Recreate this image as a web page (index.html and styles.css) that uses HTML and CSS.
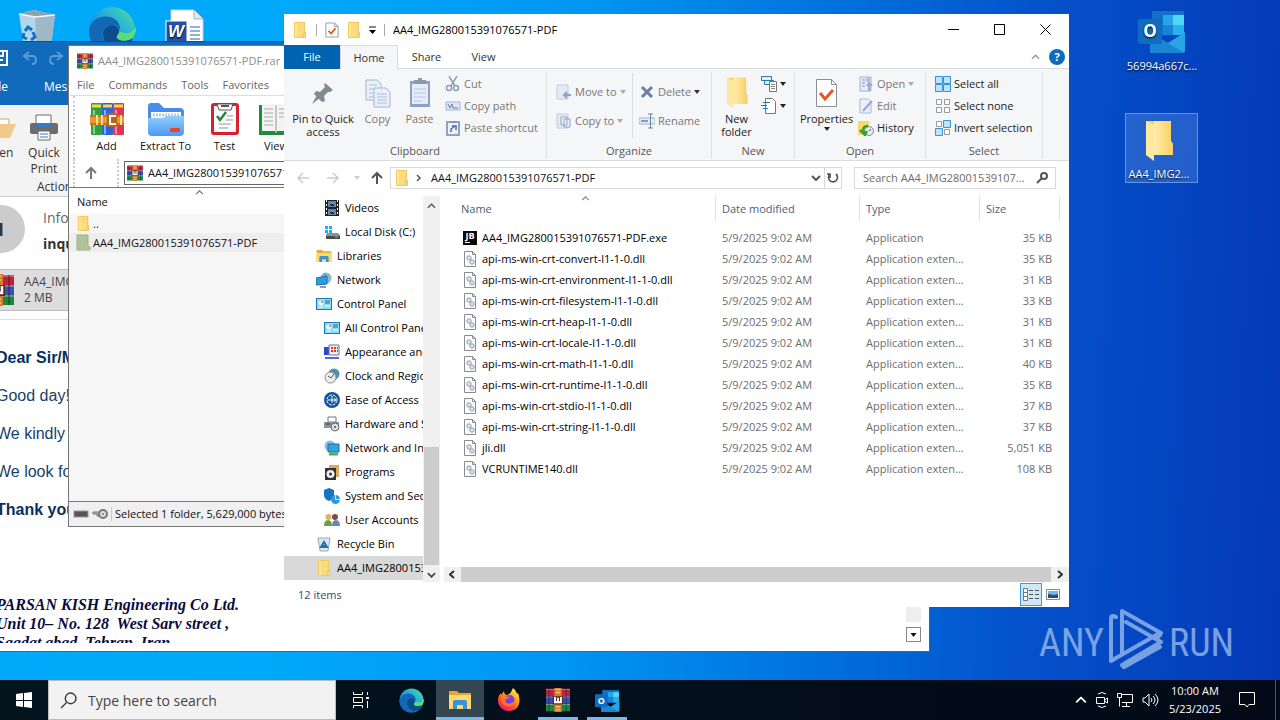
FILE: index.html
```html
<!DOCTYPE html>
<html lang="en">
<head>
<meta charset="utf-8">
<title>Desktop</title>
<link rel="stylesheet" href="styles.css">
</head>
<body>
<svg class="defs" aria-hidden="true">
  <defs>
    <linearGradient id="gFolder" x1="0" x2="1"><stop offset="0" stop-color="#ffedaa"/><stop offset="1" stop-color="#f8cf62"/></linearGradient>
    <linearGradient id="gEdge" x1="0" y1="1" x2="1" y2="0"><stop offset="0" stop-color="#0c59a4"/><stop offset=".45" stop-color="#1b9de2"/><stop offset=".75" stop-color="#35c1c9"/><stop offset="1" stop-color="#66eb6e"/></linearGradient>
    <linearGradient id="gFox" x1=".8" y1="0" x2=".2" y2="1"><stop offset="0" stop-color="#fff44f"/><stop offset=".4" stop-color="#ff980e"/><stop offset=".75" stop-color="#ff3647"/><stop offset="1" stop-color="#e31587"/></linearGradient>
    <linearGradient id="gBlueFolder" x1="0" y1="0" x2="0" y2="1"><stop offset="0" stop-color="#93cdfd"/><stop offset="1" stop-color="#4a9bf3"/></linearGradient>
  </defs>
  <symbol id="folder" viewBox="0 0 16 16"><path d="M2 0h11v10l1 1v5H2z" fill="#fbdc7c"/><path d="M2 0l3 1v15H2z" fill="#ffe798"/><path d="M2.500.5h10v10h1v5h-11zM11.500 15v-4h2" fill="none" stroke="#ecc457" stroke-width=".8"/></symbol>
  <symbol id="bigfolder" viewBox="0 0 28 42"><path d="M1 1h25v20l2 3v11H1z" fill="#f6cf67"/><path d="M9 1h17v20l2 3v11H9z" fill="url(#gFolder)"/><path d="M1 1l8 4v36l-8-6z" fill="#ffe9a0"/></symbol>
  <symbol id="rar" viewBox="0 0 32 32"><path d="M0 1h32v10H0z" fill="#c3203c"/><path d="M0 11h32v10H0z" fill="#3a4fb0"/><path d="M0 21h32v10H0z" fill="#1d8540"/><path d="M0 2h32M0 12h32M0 22h32" stroke="#fff" stroke-opacity=".35" stroke-width="1.5"/><path d="M4 1v30M27 1v30" stroke="#222" stroke-opacity=".4" stroke-width="2"/><path d="M11 0h10v32H11z" fill="#d67a2c"/><path d="M13 2h6M13 6h6M13 25h6M13 29h6" stroke="#f3c069" stroke-width="2"/><path d="M9 11h14v11H9z" fill="#5a2a26"/><path d="M12 12v7h8v-7M16 13v6" fill="none" stroke="#fff" stroke-width="2.5"/></symbol>
  <symbol id="addrar" viewBox="0 0 34 34"><rect x="1" y="1" width="11" height="32" rx="1" fill="#2aa43a"/><rect x="12" y="1" width="11" height="32" rx="1" fill="#2b65d8"/><rect x="23" y="1" width="11" height="32" rx="1" fill="#dc3556"/><path d="M2 4h9M13 4h9M24 4h9" stroke="#ffd54e" stroke-width="3"/><path d="M4 8v24M15 8v24M26 8v24" stroke="#fff" stroke-opacity=".45" stroke-width="2"/><path d="M0 13h34v10H0z" fill="#e9962f"/><path d="M0 14h34M0 22h34" stroke="#b9691d" stroke-width="1.500"/><path d="M7 13v10M12 13v10M31 13v10" stroke="#ffe08a" stroke-width="2"/><rect x="17" y="11" width="10" height="14" rx="2" fill="#b8641f"/><path d="M26 14h-6v8h6" fill="none" stroke="#fff" stroke-width="2"/></symbol>
  <symbol id="extract" viewBox="0 0 36 34"><path d="M0 4q0-3 3-3h8l5 5h16q4 0 4 4v10H0z" fill="#4a8ceb"/><path d="M3 10h30v12H3z" fill="#fff"/><path d="M5 13h26" stroke="#bfc9d6" stroke-width="3" stroke-dasharray="2 1"/><path d="M0 16h15l3-2h18v16q0 4-4 4H4q-4 0-4-4z" fill="url(#gBlueFolder)"/><rect x="22" y="26" width="10" height="4" rx="1" fill="#e8432e"/></symbol>
  <symbol id="test" viewBox="0 0 28 34"><rect y="1" width="28" height="32" rx="3" fill="#d9202f"/><rect x="3" y="4" width="22" height="26" fill="#fafafa"/><path d="M6 2h16l-2 6H8z" fill="#fff" stroke="#555"/><path d="M10 4h8" stroke="#555" stroke-width="2"/><path d="M6 14l3 4 6-8" fill="none" stroke="#25863a" stroke-width="2.500"/><path d="M16 14h6M15 18h7M8 22h12M8 26h9" stroke="#999"/></symbol>
  <symbol id="view" viewBox="0 0 34 34"><path d="M0 3h34v30H0z" fill="#1f8b3c"/><path d="M3 2h13l1 2 1-2h13v27H18l-1 2-1-2H3z" fill="#f3f3f3"/><path d="M17 4v25" stroke="#999"/><path d="M5 7h9M5 11h9M5 15h9M5 19h9M5 23h9M20 7h9M20 11h9M20 15h9" stroke="#aaa"/></symbol>
  <symbol id="edge" viewBox="0 0 48 48"><circle cx="24" cy="24" r="23" fill="url(#gEdge)"/><path d="M1 25C3 12 14 9 22 11c8 2 11 9 10 14-1-4-4-6-8-6-7 0-11 6-9 14 2 7 8 12 15 13C14 50 1 40 1 25z" fill="#1467b5"/><path d="M15 28c0-5 4-9 9-9 5 0 8 4 7 8-1 2-3 3-2 5 2 3 10 4 16 0-4 9-12 13-17 13-7-2-13-9-13-17z" fill="#0c4b8e"/><path d="M31 25c1 3-3 4-2 7 3 4 11 3 16 0l3-7c0-2-1-5-1-5-2 8-9 9-16 5z" fill="#5bdd75"/></symbol>
  <symbol id="explorer" viewBox="0 0 24 22"><path d="M1 2h8l2 2h12v16H1z" fill="#e9a52f"/><path d="M1 6h22v14H1z" fill="#ffd970"/><path d="M5 20v-7q0-2 2-2h10q2 0 2 2v7h-4v-4H9v4z" fill="#3a93d6"/></symbol>
  <symbol id="fox" viewBox="0 0 24 24"><path d="M12 23C5 23 1 18 1 12c0-3 1-5 3-7v2l3-4c0 2 1 3 2 4 3-1 4-1 5-3l2-4c2 2 3 3 4 6l1-1c3 8 2 18-9 18z" fill="url(#gFox)"/><circle cx="12.500" cy="12" r="5" fill="#7542e5"/><path d="M4 9c3-2 5 0 9 0-2 2-5 2-5 4 1 3 6 4 9 0 0 4-4 6-7 5-4 0-6-4-6-9z" fill="#ff7a1c"/></symbol>
  <symbol id="outlook" viewBox="0 0 48 44"><path d="M14 2h32v24H14z" fill="#1172c4"/><path d="M25 6h10v10H25z" fill="#27a5e8"/><path d="M35 6h11v10H35z" fill="#4fd8f8"/><path d="M25 16h10v10H25z" fill="#1685d8"/><path d="M35 16h11v10H35z" fill="#2ab0ee"/><path d="M12 24l18 10 17-11v20H12z" fill="#29a3e6"/><path d="M12 24l35 20H12z" fill="#1b86d3"/><rect y="10" width="24" height="25" rx="2" fill="#0f6cc2"/><text x="12" y="28" text-anchor="middle" font-family="Open Sans, sans-serif" font-weight="700" font-size="17" fill="#fff">O</text></symbol>
  <symbol id="win" viewBox="0 0 16 16"><path d="M0 2l7-1v7H0zM8 1l8-1v8H8zM0 9h7v6l-7-1zM8 9h8v7l-8-1z" fill="#fff"/></symbol>
  <symbol id="magnify" viewBox="0 0 16 16"><circle cx="10" cy="6" r="5" fill="none" stroke="currentColor" stroke-width="1.300"/><path d="M6 10L1 15" stroke="currentColor" stroke-width="1.300"/></symbol>
  <symbol id="dll" viewBox="0 0 14 16"><path d="M1.500.5h8l3 3v12h-11z" fill="#fdfdfd" stroke="#8b8b8b"/><path d="M9.500.5v3h3" fill="none" stroke="#8b8b8b"/><circle cx="6" cy="7" r="2.200" fill="#dce6ef" stroke="#8ba0b3"/><circle cx="9" cy="11" r="2.200" fill="#dce6ef" stroke="#8ba0b3"/></symbol>
  <symbol id="jb" viewBox="0 0 14 14"><path d="M0 0h14v14H0z" fill="#0b0b0b"/><text x="7" y="8" text-anchor="middle" font-family="Open Sans, sans-serif" font-weight="700" font-size="9" fill="#fff">JB</text><path d="M2 11.500h5" stroke="#fff"/></symbol>
  <symbol id="sheet" viewBox="0 0 16 18"><path d="M1 1h10l4 4v12H1z" fill="#fff" stroke="#8b929a"/><path d="M11 1v4h4" fill="none" stroke="#8b929a"/><path d="M4 10l3 3 5-6" fill="none" stroke="#e2521f" stroke-width="2"/></symbol>
  <symbol id="cpanel" viewBox="0 0 16 12"><path d="M0 0h16v12H0z" fill="#1b7bbd"/><path d="M1 1h14v10H1z" fill="#8bdcfa"/><circle cx="5" cy="5" r="2.500" fill="#fff"/><path d="M5 5V2.500A2.500 2.500 0 0 1 7.500 5z" fill="#e39a2a"/><path d="M9 3h5M9 5h5" stroke="#1766a8"/><path d="M9 8h5M3 9h4" stroke="#fff"/></symbol>
  <symbol id="up" viewBox="0 0 12 14"><path d="M6 13V2M1 7l5-5 5 5" fill="none" stroke="currentColor" stroke-width="2"/></symbol>
  <symbol id="chev" viewBox="0 0 10 6"><path d="M1 5l4-4 4 4" fill="none" stroke="currentColor" stroke-width="1.500"/></symbol>
  <symbol id="caret" viewBox="0 0 6 4"><path d="M0 0h6L3 4z" fill="currentColor"/></symbol>
  <symbol id="bin" viewBox="0 0 40 46"><path d="M2 5l15-4 21 5-5 39H8z" fill="#cfdfe9" fill-opacity=".85"/><path d="M2 5l16 3 20-2-21-5z" fill="#8fa4ae"/><path d="M18 8l20-2-5 39H20z" fill="#9fb8c8"/><path d="M2 5l16 3 20-2" fill="none" stroke="#f4f8fa" stroke-width="1.500"/><path d="M8 22l3-4 4 3M16 23l2 5-4 3M10 30l-4-2 1-4" fill="none" stroke="#1672c4" stroke-width="3"/></symbol>
</svg>

<main class="desktop">
  <div class="shortcut s-bin"><svg width="40" height="46"><use href="#bin"/></svg></div>
  <div class="shortcut s-edge"><svg width="48" height="48"><use href="#edge"/></svg></div>
  <div class="shortcut s-word"><svg width="40" height="44" viewBox="0 0 40 44"><path d="M6 1h23l9 9v33H6z" fill="#fff" stroke="#ccc"/><path d="M29 1v9h9" fill="#ddeaf6" stroke="#aac"/><path d="M25 18h10M25 22h10M25 26h10M25 30h10" stroke="#2b5fb4"/><rect x="1" y="12" width="21" height="22" fill="#2352a8" stroke="#fff"/><text x="11" y="28" text-anchor="middle" font-family="Liberation Sans, sans-serif" font-weight="700" font-style="italic" font-size="17" fill="#fff">W</text></svg></div>
  <a class="shortcut s-mail" href="#"><svg width="48" height="44"><use href="#outlook"/></svg><span>56994a667c...</span></a>
  <a class="shortcut s-folder" href="#"><svg width="28" height="42"><use href="#bigfolder"/></svg><span>AA4_IMG2...</span></a>

  <svg class="watermark" width="200" height="64" viewBox="0 0 200 64" aria-label="ANY RUN">
    <g fill="#a9c8f2" font-family="'Liberation Sans Narrow', 'Roboto Condensed', 'Open Sans Condensed', sans-serif" font-size="38"><text x="0" y="48">ANY</text><text x="130" y="48">RUN</text></g>
    <g fill="none" stroke="#a9c8f2" stroke-width="4" stroke-linejoin="round" stroke-linecap="round"><path d="M77 9l-3-1q-2 0-2 3v42l5-3 42-24q4-2 2 1l-2 2"/><path d="M83 46V3l39 22M87 14l35 20-39 23 2 2 36-20"/></g>
  </svg>

  <section class="window mail" aria-label="Message">
    <header class="mail-top">
      <div class="mail-quick"><svg width="100" height="20" viewBox="0 0 100 20" fill="none"><path d="M10 3h16v14H10zM14 3v5h8V3M14 17v-5h8" stroke="#fff" stroke-width="2"/><path d="M48 4l-5 4 5 4M43 8h8q4 0 4 4t-4 4M76 4l5 4-5 4M81 8h-8q-4 0-4 4t4 4" stroke="#5c9ad3" stroke-width="2"/></svg></div>
      <nav class="mail-tabs"><button>File</button><button>Message</button></nav>
    </header>
    <div class="mail-ribbon">
      <button><svg width="36" height="32" viewBox="0 0 36 32"><path d="M8 8h20v15H8z" fill="#fff" stroke="#d7a65c"/><path d="M4 27l6-14h25l-6 14z" fill="#f0c98b"/></svg>Open</button>
      <button><svg width="30" height="32" viewBox="0 0 30 32"><path d="M7 4h15v9H7z" fill="#fff" stroke="#6b6b6b"/><rect x="1" y="12" width="28" height="11" rx="2" fill="#6d6d6d"/><path d="M7 12h15v4H7z" fill="#3a7ab8"/><path d="M9 20h12v9H9z" fill="#fff" stroke="#6b6b6b"/><path d="M11 23h8M11 26h8" stroke="#3a7ab8"/></svg>Quick<br>Print</button>
      <p>Actions</p>
    </div>
    <div class="mail-head"><span class="avatar">I</span><div><p>Info</p><p class="subject">inquiry</p></div></div>
    <div class="attachment"><svg width="32" height="32"><use href="#rar"/></svg><p>AA4_IMG280<br>2 MB</p></div>
    <article class="letter">
      <p><b>Dear Sir/Madam,</b></p><p>Good day!</p><p>We kindly</p><p>We look forward</p><p><b>Thank you</b></p>
      <address>PARSAN KISH Engineering Co Ltd.<br>Unit 10– No. 128&nbsp; West Sarv street ,<br>Saadat abad, Tehran, Iran</address>
    </article>
    <button class="mail-scroll" aria-label="Scroll down"><svg width="7" height="4"><use href="#caret"/></svg></button>
  </section>

  <section class="window rar" aria-label="WinRAR">
    <header class="rar-title"><svg width="16" height="16"><use href="#rar"/></svg>AA4_IMG280015391076571-PDF.rar</header>
    <nav class="rar-menu"><button>File</button><button>Commands</button><button>Tools</button><button>Favorites</button></nav>
    <div class="rar-tools">
      <button><svg width="34" height="34"><use href="#addrar"/></svg>Add</button>
      <button><svg width="36" height="34"><use href="#extract"/></svg>Extract To</button>
      <button><svg width="28" height="34"><use href="#test"/></svg>Test</button>
      <button class="last"><svg width="34" height="34"><use href="#view"/></svg>View</button>
    </div>
    <div class="rar-address"><button aria-label="Up"><svg width="12" height="14"><use href="#up"/></svg></button><label><svg width="16" height="16"><use href="#rar"/></svg><input aria-label="Path" value="AA4_IMG280015391076571-PDF.rar"></label></div>
    <div class="rar-list">
      <div class="rar-head"><svg width="9" height="5"><use href="#chev"/></svg>Name</div>
      <p><svg width="15" height="17"><use href="#folder"/></svg>..</p>
      <p class="picked"><svg width="15" height="17" viewBox="0 0 15 17"><path d="M1 1h11v11l2 1v3H1z" fill="#b3c295" stroke="#a2b184"/></svg>AA4_IMG280015391076571-PDF</p>
    </div>
    <footer class="rar-status"><svg width="38" height="12" viewBox="0 0 38 12"><rect x="1" y="3" width="14" height="6" fill="#555" stroke="#999"/><path d="M20 4h8v4h-4v-2h-4z" fill="#bbb" stroke="#777"/><circle cx="30" cy="6" r="4" fill="#ddd" stroke="#777" stroke-width="2"/><circle cx="30" cy="6" r="1" fill="#777"/></svg><span>Selected 1 folder, 5,629,000 bytes</span></footer>
  </section>

  <section class="window files" aria-label="File Explorer">
    <header class="titlebar">
      <svg width="16" height="16"><use href="#folder"/></svg><i></i><svg width="14" height="16"><use href="#sheet"/></svg><svg width="16" height="16"><use href="#folder"/></svg>
      <svg width="7" height="8" viewBox="0 0 7 8"><path d="M0 1h7" stroke="#111"/><path d="M0 4h7L3.500 8z"/></svg><i></i><span>AA4_IMG280015391076571-PDF</span>
      <div class="winctl">
        <button aria-label="Minimize"><svg width="11" height="11"><path d="M0 5.500h11" stroke="#000"/></svg></button>
        <button aria-label="Maximize"><svg width="11" height="11"><path d="M.5.5h10v10H.5z" fill="none" stroke="#000"/></svg></button>
        <button aria-label="Close"><svg width="11" height="11"><path d="M.5.5l10 10M10.500.5l-10 10" stroke="#000"/></svg></button>
      </div>
    </header>
    <nav class="tabs"><button class="file">File</button><button class="on">Home</button><button>Share</button><button>View</button><span class="help"><svg width="9" height="6" color="#999"><use href="#chev"/></svg><button aria-label="Help">?</button></span></nav>

    <div class="ribbon">
      <div class="group clip">
        <div class="tools">
          <button class="big"><svg width="32" height="32" viewBox="0 0 32 32"><g fill="#7f8b92"><path d="M18 6l8 7-3 2-2 0-4 4 1 5-3 1-8-8 2-3 4 1 5-5-1-2z"/><path d="M10 18l3 3-8 6z"/></g></svg>Pin to Quick<br>access</button>
          <button class="big dim copy"><svg width="32" height="32" viewBox="0 0 32 32"><g fill="#eaf0f9" stroke="#a1b4d2"><path d="M4 3h11l4 4v16H4z"/><path d="M12 11h12l4 4v15H12z"/></g><path d="M7 8h8M7 12h5M7 16h5M7 20h5M15 17h10M15 20h10M15 23h10M15 26h10" stroke="#a9bddb"/></svg>Copy</button>
          <button class="big dim paste"><svg width="32" height="32" viewBox="0 0 32 32"><path d="M6 4h20v26H6z" fill="#8ea1c5"/><path d="M8 7h16v20H8z" fill="#e4ecf8"/><path d="M10 3h12v4H10zM14 1h4v3h-4z" fill="#8c99ad"/><path d="M10 12h12M10 16h12M10 20h12M10 24h8" stroke="#b6c6e0"/></svg>Paste</button>
          <div class="stack dim">
            <button><svg width="16" height="16" viewBox="0 0 16 16" fill="none" stroke="#8d9fb8"><path d="M4 0l6 10M12 0L6 10" stroke-width="1.500"/><circle cx="4" cy="12" r="2.500" stroke-width="1.500"/><circle cx="11" cy="12" r="2.500" stroke-width="1.500"/></svg>Cut</button>
            <button><svg width="16" height="16" viewBox="0 0 16 16"><path d="M1 4h14v8H1z" fill="#dce6f6" stroke="#a4b6d6"/><path d="M3 6l2 4 2-4 1 4h5" fill="none" stroke="#6481ae"/></svg>Copy path</button>
            <button><svg width="16" height="16" viewBox="0 0 16 16"><path d="M2 2h12v13H2z" fill="#eaf1fb" stroke="#8fa3c6" stroke-width="2"/><path d="M5 1h6v2H5z" fill="#8793a8"/><path d="M6 12V9l4-3M7 6h4v4" fill="none" stroke="#4a6fa8" stroke-width="1.500"/></svg>Paste shortcut</button>
          </div>
        </div><h2>Clipboard</h2>
      </div>
      <div class="group org">
        <div class="tools">
          <div class="stack dim">
            <button><svg width="16" height="16" viewBox="0 0 16 16"><path d="M1 1h11v14H1z" fill="#e3eaf6" stroke="#c0cce2"/><path d="M15 11H8M11 8l-3 3 3 3" fill="none" stroke="#8da2c6" stroke-width="2"/></svg>Move to<svg width="6" height="4" color="#aaa"><use href="#caret"/></svg></button>
            <button><svg width="16" height="16" viewBox="0 0 16 16"><path d="M1 1h11v14H1z" fill="#e3eaf6" stroke="#c0cce2"/><path d="M5 4h6v8H5zM8 6h6v8H8z" fill="#edf2fb" stroke="#8da2c6"/></svg>Copy to<svg width="6" height="4" color="#aaa"><use href="#caret"/></svg></button>
          </div>
          <div class="stack dim split">
            <button><svg width="16" height="16" viewBox="0 0 16 16"><path d="M3 3l10 10M13 3L3 13" stroke="#6d809f" stroke-width="3"/></svg>Delete<svg width="6" height="4" color="#333"><use href="#caret"/></svg></button>
            <button><svg width="16" height="16" viewBox="0 0 16 16"><path d="M0 5h16v6H0z" fill="#e5edf9" stroke="#9fb2d3"/><path d="M2 7h7v2H2z" fill="#7f9ac5"/><path d="M9 1h5M9 15h5M11.500 1v14" stroke="#6a7f9e"/></svg>Rename</button>
          </div>
        </div><h2>Organize</h2>
      </div>
      <div class="group new">
        <div class="tools">
          <button class="big"><svg width="32" height="32" viewBox="-5 0 38 42"><use href="#bigfolder" width="28" height="42"/></svg>New<br>folder</button>
          <div class="stack">
            <button aria-label="New item"><svg width="16" height="16" viewBox="0 0 16 16"><path d="M.5.5h10v4H.5zM3.500 4.500h9v4h-9z" fill="#dff0fb" stroke="#2d789f"/><path d="M8.500 5.500h7v10h-7z" fill="#fff" stroke="#777"/><path d="M10 8.500h4M10 10.500h4M10 12.500h4" stroke="#888"/></svg><svg width="6" height="4"><use href="#caret"/></svg></button>
            <button aria-label="Easy access"><svg width="16" height="16" viewBox="0 0 16 16"><path d="M4.500.5h7l3 3v12h-10z" fill="#fff" stroke="#777"/><path d="M2 4.500h7M0 7.500h6M2 10.500h5" stroke="#2479b4"/></svg><svg width="6" height="4"><use href="#caret"/></svg></button>
          </div>
        </div><h2>New</h2>
      </div>
      <div class="group open">
        <div class="tools">
          <button class="big"><svg width="32" height="32" viewBox="0 0 32 32"><path d="M5.500 2.500h15l5 5v22h-20z" fill="#fff" stroke="#8a8f96"/><path d="M20.500 2.500v5h5" fill="none" stroke="#8a8f96"/><path d="M9 16l5 6 8-9" fill="none" stroke="#e5562b" stroke-width="3"/></svg>Properties<svg class="under" width="6" height="4"><use href="#caret"/></svg></button>
          <div class="stack">
            <button class="dim"><svg width="16" height="16" viewBox="0 0 16 16"><path d="M2 1h11v14H2z" fill="#e7eefa" stroke="#9db0d2"/><path d="M4 4h3M4 7h3M4 10h3M8 3h4M8 5h4" stroke="#7f95bf"/><path d="M11 15V8M9 10l2-3 3 3" fill="none" stroke="#9aabca" stroke-width="2"/></svg>Open<svg width="6" height="4" color="#aaa"><use href="#caret"/></svg></button>
            <button class="dim"><svg width="16" height="16" viewBox="0 0 16 16"><path d="M2 1h8l3 3v11H2z" fill="#eaf0fa" stroke="#a9b9d6"/><path d="M5 13l9-10" stroke="#95a8ca" stroke-width="2"/></svg>Edit</button>
            <button><svg width="16" height="16" viewBox="0 0 16 16"><path d="M0 1h11v14H0z" fill="#fbd968"/><circle cx="11" cy="11" r="4.500" fill="#e7ebed" stroke="#888"/><path d="M11 11l2-2" fill="none" stroke="#555"/><path d="M10 6C5 6 4 9 7 14M2 10l5 5 2-4" fill="none" stroke="#35a33c" stroke-width="2.500"/></svg>History</button>
          </div>
        </div><h2>Open</h2>
      </div>
      <div class="group sel">
        <div class="tools"><div class="stack">
          <button><svg width="16" height="16" viewBox="0 0 16 16" fill="#bfe2fb" stroke="#3695d5"><path d="M.5.5h7v7h-7zM8.500.5h7v7h-7zM.5 8.500h7v7h-7zM8.500 8.500h7v7h-7z"/></svg>Select all</button>
          <button><svg width="16" height="16" viewBox="0 0 16 16" fill="#fff" stroke="#999"><path d="M1.500 1.500h5v5h-5zM9.500 1.500h5v5h-5zM1.500 9.500h5v5h-5zM9.500 9.500h5v5h-5z"/></svg>Select none</button>
          <button><svg width="16" height="16" viewBox="0 0 16 16"><path d="M1.500 1.500h5v5h-5zM9.500 9.500h5v5h-5z" fill="#fff" stroke="#999"/><path d="M8.500.5h7v7h-7zM.5 8.500h7v7h-7z" fill="#bfe2fb" stroke="#3695d5"/></svg>Invert selection</button>
        </div></div><h2>Select</h2>
      </div>
    </div>

    <div class="addressbar">
      <button aria-label="Back"><svg width="14" height="12" viewBox="0 0 14 12" fill="none" stroke="#ccc" stroke-width="1.500"><path d="M13 6H2M7 1L2 6l5 5"/></svg></button>
      <button aria-label="Forward"><svg width="14" height="12" viewBox="0 0 14 12" fill="none" stroke="#ccc" stroke-width="1.500"><path d="M1 6h11M7 1l5 5-5 5"/></svg></button>
      <svg class="hist" width="6" height="4" color="#ccc"><use href="#caret"/></svg>
      <button class="upbtn" aria-label="Up"><svg width="12" height="14" color="#555"><use href="#up"/></svg></button>
      <div class="crumbs"><svg width="16" height="16"><use href="#folder"/></svg><svg width="6" height="8" viewBox="0 0 6 8"><path d="M1 1l3 3-3 3" fill="none" stroke="#555" stroke-width="1.500"/></svg><span>AA4_IMG280015391076571-PDF</span>
        <button aria-label="History"><svg width="10" height="6" viewBox="0 0 10 6"><path d="M1 1l4 4 4-4" fill="none" stroke="#555" stroke-width="2"/></svg></button>
        <button class="refresh" aria-label="Refresh"><svg width="12" height="12" viewBox="0 0 12 12"><path d="M3 2a4.500 4.500 0 1 0 6 0M3 6V2H0" fill="none" stroke="#555" stroke-width="1.700"/></svg></button></div>
      <label class="search"><input aria-label="Search" placeholder="Search AA4_IMG28001539107..."><svg width="12" height="12" viewBox="0 0 12 12" fill="none" stroke="#555" stroke-width="2"><circle cx="8" cy="4" r="3"/><path d="M6 6l-5 5"/></svg></label>
    </div>

    <div class="body">
      <div class="side">
        <ul>
          <li class="sub"><svg width="16" height="16" viewBox="0 0 16 16"><path d="M1 0h14v16H1z" fill="#222"/><path d="M4 1h8v6H4zM4 9h8v6H4z" fill="#4f86c6"/><path d="M4 5l4-2 4 3M4 13l4-2 4 3" stroke="#d3b04b"/><path d="M2.500 0v16M13.500 0v16" stroke="#fff" stroke-dasharray="2 2"/></svg>Videos</li>
          <li class="sub"><svg width="16" height="16" viewBox="0 0 16 16"><path d="M1 2h3v3H1zM5 2h3v3H5zM1 6h3v3H1zM5 6h3v3H5z" fill="#1fb0ee"/><path d="M3 9h11l2 2v4H2v-4z" fill="#8c9296"/><path d="M2 12h14v3H2z" fill="#454b50"/><path d="M11 13h3" stroke="#62dd62"/></svg>Local Disk (C:)</li>
          <li><svg width="16" height="16" viewBox="0 0 24 22"><use href="#explorer"/></svg>Libraries</li>
          <li><svg width="16" height="16" viewBox="0 0 16 16"><circle cx="10" cy="6" r="5.500" fill="#8fb7c9"/><path d="M8 1l3 5-3 5" stroke="#4e8dac" fill="none"/><path d="M0 6l11-2v8L0 13z" fill="#2d9ce0" stroke="#1272b1"/><path d="M4 15h6" stroke="#999" stroke-width="2"/></svg>Network</li>
          <li><svg width="16" height="12"><use href="#cpanel"/></svg>Control Panel</li>
          <li class="sub"><svg width="16" height="12"><use href="#cpanel"/></svg>All Control Panel Items</li>
          <li class="sub"><svg width="16" height="16" viewBox="0 0 16 16"><path d="M0 3h10v8H0z" fill="#2a48d8"/><path d="M5 1h10v10H5z" fill="#eee" stroke="#777"/><path d="M7 4h7M7 7h7" stroke="#d33" stroke-width="2" stroke-dasharray="2 1"/><path d="M1 13h14v2H1z" fill="#5468e0"/></svg>Appearance and Personalization</li>
          <li class="sub"><svg width="16" height="16" viewBox="0 0 16 16"><circle cx="10" cy="6" r="5.500" fill="#4c8fb0"/><circle cx="6.500" cy="9.500" r="5.500" fill="#eee" stroke="#888"/><path d="M4 8l3 2 3-4" fill="none" stroke="#555"/></svg>Clock and Region</li>
          <li class="sub"><svg width="16" height="16" viewBox="0 0 16 16"><circle cx="8" cy="8" r="8" fill="#10559e"/><circle cx="8" cy="8" r="5" fill="none" stroke="#fff" stroke-dasharray="3 1"/><path d="M4 8h8M8 4v7M10 6l2 2-2 2" fill="none" stroke="#fff"/></svg>Ease of Access</li>
          <li class="sub"><svg width="16" height="16" viewBox="0 0 16 16"><path d="M4 1h8v5H4z" fill="#fff" stroke="#777"/><path d="M0 6h15v6H0z" fill="#89949a"/><path d="M2 8h4" stroke="#333"/><circle cx="11" cy="11" r="4" fill="#ddd" stroke="#667"/><circle cx="11" cy="11" r="1" fill="#357"/></svg>Hardware and Sound</li>
          <li class="sub"><svg width="16" height="16" viewBox="0 0 16 16"><circle cx="6" cy="6" r="5.500" fill="#8ac0dc"/><path d="M4 4h11v8H4z" fill="#30a4df" stroke="#1771a8"/><path d="M5 14h9" stroke="#4bb15a" stroke-width="3"/></svg>Network and Internet</li>
          <li class="sub"><svg width="16" height="16" viewBox="0 0 16 16"><path d="M5 1h10v12H5z" fill="#dcaa58"/><path d="M1 4h11v12H1z" fill="#333"/><circle cx="6.500" cy="10" r="4" fill="#eee"/><circle cx="6.500" cy="10" r="1.500" fill="#333"/></svg>Programs</li>
          <li class="sub"><svg width="16" height="16" viewBox="0 0 16 16"><path d="M0 2l5-2 5 2v5q0 4-5 6-5-2-5-6z" fill="#1575c4"/><circle cx="11.500" cy="11.500" r="4.500" fill="#2a9bdd"/><path d="M11.500 7v4.500H16" stroke="#bfe6fb" fill="none"/></svg>System and Security</li>
          <li class="sub"><svg width="16" height="16" viewBox="0 0 16 16"><circle cx="4.500" cy="5" r="3" fill="#dcb36b"/><circle cx="11" cy="5" r="3" fill="#7b523c"/><path d="M0 14q0-6 4-6t4 6z" fill="#6ba13e"/><path d="M8 14q0-6 4-6t4 6z" fill="#6788b5"/></svg>User Accounts</li>
          <li><svg width="16" height="16" viewBox="0 0 16 16"><path d="M2 2h12l-2 13H4z" fill="#dce8ef" stroke="#9baab5"/><path d="M5 11l3-5 3 5zM7 10h2" fill="none" stroke="#226fb5" stroke-width="2"/></svg>Recycle Bin</li>
          <li class="current"><svg width="16" height="16"><use href="#folder"/></svg>AA4_IMG280015391076571-PDF</li>
        </ul>
        <div class="vbar"><svg width="9" height="6"><use href="#chev"/></svg><span></span><svg width="9" height="6" viewBox="0 0 10 6"><path d="M1 1l4 4 4-4" fill="none" stroke="#444" stroke-width="2"/></svg></div>
      </div>
      <div class="list">
        <svg class="sort" width="9" height="5"><use href="#chev"/></svg>
        <table>
          <colgroup><col><col class="c-date"><col class="c-type"><col class="c-size"><col class="c-end"></colgroup>
          <thead><tr><th><span>Name</span></th><th><span>Date modified</span></th><th><span>Type</span></th><th><span>Size</span></th><th></th></tr></thead>
          <tbody>
            <tr><td><svg width="14" height="14"><use href="#jb"/></svg>AA4_IMG280015391076571-PDF.exe</td><td>5/9/2025 9:02 AM</td><td>Application</td><td>35 KB</td></tr>
            <tr><td><svg width="14" height="16"><use href="#dll"/></svg>api-ms-win-crt-convert-l1-1-0.dll</td><td>5/9/2025 9:02 AM</td><td>Application exten...</td><td>35 KB</td></tr>
            <tr><td><svg width="14" height="16"><use href="#dll"/></svg>api-ms-win-crt-environment-l1-1-0.dll</td><td>5/9/2025 9:02 AM</td><td>Application exten...</td><td>31 KB</td></tr>
            <tr><td><svg width="14" height="16"><use href="#dll"/></svg>api-ms-win-crt-filesystem-l1-1-0.dll</td><td>5/9/2025 9:02 AM</td><td>Application exten...</td><td>33 KB</td></tr>
            <tr><td><svg width="14" height="16"><use href="#dll"/></svg>api-ms-win-crt-heap-l1-1-0.dll</td><td>5/9/2025 9:02 AM</td><td>Application exten...</td><td>31 KB</td></tr>
            <tr><td><svg width="14" height="16"><use href="#dll"/></svg>api-ms-win-crt-locale-l1-1-0.dll</td><td>5/9/2025 9:02 AM</td><td>Application exten...</td><td>31 KB</td></tr>
            <tr><td><svg width="14" height="16"><use href="#dll"/></svg>api-ms-win-crt-math-l1-1-0.dll</td><td>5/9/2025 9:02 AM</td><td>Application exten...</td><td>40 KB</td></tr>
            <tr><td><svg width="14" height="16"><use href="#dll"/></svg>api-ms-win-crt-runtime-l1-1-0.dll</td><td>5/9/2025 9:02 AM</td><td>Application exten...</td><td>35 KB</td></tr>
            <tr><td><svg width="14" height="16"><use href="#dll"/></svg>api-ms-win-crt-stdio-l1-1-0.dll</td><td>5/9/2025 9:02 AM</td><td>Application exten...</td><td>37 KB</td></tr>
            <tr><td><svg width="14" height="16"><use href="#dll"/></svg>api-ms-win-crt-string-l1-1-0.dll</td><td>5/9/2025 9:02 AM</td><td>Application exten...</td><td>37 KB</td></tr>
            <tr><td><svg width="14" height="16"><use href="#dll"/></svg>jli.dll</td><td>5/9/2025 9:02 AM</td><td>Application exten...</td><td>5,051 KB</td></tr>
            <tr><td><svg width="14" height="16"><use href="#dll"/></svg>VCRUNTIME140.dll</td><td>5/9/2025 9:02 AM</td><td>Application exten...</td><td>108 KB</td></tr>
          </tbody>
        </table>
        <div class="hbar"><svg width="6" height="9" viewBox="0 0 6 9"><path d="M5 1L1 4.500 5 8" fill="none" stroke="#333" stroke-width="2"/></svg><span></span><svg width="6" height="9" viewBox="0 0 6 9"><path d="M1 1l4 3.500L1 8" fill="none" stroke="#333" stroke-width="2"/></svg></div>
      </div>
    </div>
    <footer class="status"><span>12 items</span>
      <button class="on" aria-label="Details"><svg width="18" height="14" viewBox="0 0 18 14"><path d="M1.500.5h4v12h-4zM1.500 4.500h4M1.500 8.500h4" fill="#fff" stroke="#777"/><path d="M7 2.500h4M7 6.500h4M7 10.500h4M13 2.500h4M13 6.500h4M13 10.500h4" stroke="#555"/></svg></button>
      <button aria-label="Large icons"><svg width="14" height="11" viewBox="0 0 14 11"><path d="M.5.5h13v10H.5z" fill="#fff" stroke="#888"/><path d="M2 2h10v4H2z" fill="#7bb2f0"/><path d="M2 5l6 1 4-1v4H2z" fill="#27506f"/></svg></button></footer>
  </section>
</main>

<footer class="taskbar">
  <button class="start" aria-label="Start"><svg width="16" height="16"><use href="#win"/></svg></button>
  <label class="find"><svg width="17" height="17"><use href="#magnify"/></svg><input aria-label="Type here to search" placeholder="Type here to search"></label>
  <button class="app wide" aria-label="Task view"><svg width="18" height="18" viewBox="0 0 18 18" fill="none" stroke="#fff"><path d="M1.500 1v2.500h9V1M1.500 17v-2.500h9V17M1.500 6.500h9v5h-9zM15.500 1v3M15.500 10v7"/><path d="M14 6h3v2h-3z" fill="#fff" stroke="none"/></svg></button>
  <button class="app wide" aria-label="Edge"><svg width="25" height="25"><use href="#edge"/></svg></button>
  <button class="app active" aria-label="File Explorer"><svg width="24" height="22"><use href="#explorer"/></svg></button>
  <button class="app" aria-label="Firefox"><svg width="24" height="24"><use href="#fox"/></svg></button>
  <button class="app running" aria-label="WinRAR"><svg width="24" height="24"><use href="#rar"/></svg></button>
  <button class="app running" aria-label="Outlook"><svg width="25" height="23"><use href="#outlook"/></svg></button>
  <div class="tray">
    <svg width="12" height="8" viewBox="0 0 10 6"><use href="#chev"/></svg>
    <svg width="12" height="16" viewBox="0 0 12 16" fill="none" stroke="#fff"><path d="M2 2q4-3 8 0M2 14q4 3 8 0M.5 5.500h8v6h-8zM8.500 8l3-2v5l-3-2"/></svg>
    <svg width="16" height="14" viewBox="0 0 16 14" fill="none" stroke="#fff"><path d="M4 1.500h11.500v8H5M.5.5h4v4h-4zM2.500 4.500v9M5 13.500h8M9.500 10v3"/></svg>
    <svg width="18" height="14" viewBox="0 0 18 14" fill="none" stroke="#fff"><path d="M1 5h2l4-4v12L3 9H1zM9 5q2 2 0 4M11 3q4 4 0 8M13 1q6 6 0 12"/></svg>
    <time>10:00 AM<br>5/23/2025</time>
    <svg class="note" width="16" height="16" viewBox="0 0 16 16" fill="none" stroke="#fff"><path d="M.5.5h15v12H10l-2 2.500-2-2.500H.5z"/></svg>
  </div>
</footer>
</body>
</html>
```
FILE: styles.css
```css
* { box-sizing: border-box; }
body { margin: 0; height: 100vh; display: flex; flex-direction: column; overflow: hidden; font: 11px/14px "Open Sans", "Noto Sans", sans-serif; color: #111; }
button, input { font: inherit; color: inherit; background: none; border: 0; padding: 0; margin: 0; white-space: nowrap; }
input { outline: 0; min-width: 0; flex: 1; }
p, h2, ul { margin: 0; padding: 0; font-weight: 400; font-size: inherit; }
svg { display: block; flex: none; }
.defs { position: absolute; width: 0; height: 0; }

.desktop { position: relative; flex: 1; overflow: hidden; background: linear-gradient(92deg, #00a9fa 0%, #00a9fb 22%, #0096f3 45%, #006edb 66%, #0552cb 80%, #0439b6 100%); }
.window { position: absolute; display: flex; flex-direction: column; overflow: hidden; background: #fff; }
.shortcut { position: absolute; display: flex; flex-direction: column; align-items: center; color: #fff; text-decoration: none; text-shadow: 0 1px 2px #000; }
.s-bin { left: 17px; top: 9px; }
.s-edge { left: 88px; top: 6px; }
.s-word { left: 165px; top: 9px; }
.s-mail { right: 82px; top: 9px; width: 72px; gap: 6px; }
.s-folder { right: 82px; top: 113px; width: 73px; height: 70px; padding: 6px 5px 0 0; gap: 5px; background: rgba(110, 160, 230, .3); border: 1px solid rgba(140, 185, 245, .6); }
.watermark { position: absolute; right: 41px; bottom: 8px; opacity: .7; }

.mail { left: -20px; right: 350px; top: 41px; bottom: 28px; border: 1px solid #56606a; border-top-color: #0b4f91; }
.mail-top { background: #116bbd; color: #fff; height: 63px; }
.mail-quick { height: 38px; padding-top: 6px; }
.mail-tabs { display: flex; gap: 36px; padding-left: 8px; font-size: 12px; }
.mail-ribbon { display: grid; grid-template-columns: 34px 56px; height: 92px; padding-top: 6px; background: #f3f3f3; border-bottom: 1px solid #ccc; font-size: 12px; line-height: 16px; color: #333; }
.mail-ribbon button { display: block; align-self: start; text-align: center; }
.mail-ribbon button svg { margin: 0 auto 2px; }
.mail-ribbon button:nth-child(2) { padding-left: 2px; }
.mail-ribbon p { grid-column: 1 / 3; padding-left: 56px; line-height: 12px; }
.mail-head { display: flex; gap: 18px; height: 72px; padding-top: 8px; color: #666; font-size: 14px; line-height: 26px; }
.avatar { width: 48px; height: 48px; margin-left: -4px; border-radius: 50%; background: #ccc; color: #333; font-size: 18px; font-weight: 700; line-height: 48px; text-align: center; }
.subject { color: #333; font-weight: 700; }
.attachment { display: flex; align-items: center; gap: 10px; height: 42px; background: #ddd; border: 1px solid #bbb; font-size: 12px; line-height: 16px; color: #444; }
.letter { flex: 1; margin: 8px 0; padding: 29px 15px 0; border-top: 1px solid #ddd; overflow: hidden; font: 16px/18px "Liberation Sans", sans-serif; color: #173f6b; }
.letter p { margin-bottom: 20px; }
.letter b { color: #0b2f5c; }
.letter address { margin-top: 76px; font: italic bold 16px/19px "Liberation Serif", serif; color: #0b0b3c; }
.mail-scroll { position: absolute; right: 8px; bottom: 9px; width: 15px; height: 15px; border: 1px solid #888; display: grid; place-items: center; box-shadow: 0 -20px 0 #eee; }

.rar { left: 68px; top: 45px; bottom: 153px; width: 480px; border: 1px solid #777; }
.rar-title { display: flex; align-items: center; gap: 5px; height: 29px; padding-left: 8px; color: #8d8d8d; }
.rar-menu { display: flex; gap: 14px; padding-left: 8px; height: 21px; color: #666; border-bottom: 1px solid #ddd; }
.rar-tools { display: flex; height: 63px; padding: 6px 0 0 2px; margin-left: 4px; border-left: 2px dotted #ccc; }
.rar-tools button { width: 59px; display: flex; flex-direction: column; align-items: center; gap: 3px; }
.rar-tools .last { width: 44px; }
.rar-address { display: flex; height: 28px; align-items: center; margin-left: 4px; border-left: 2px dotted #ccc; }
.rar-address button { width: 44px; padding-right: 10px; display: grid; place-items: center; color: #777; border-right: 2px dotted #ccc; height: 28px; margin-right: 5px; }
.rar-address label { flex: 1; display: flex; align-items: center; gap: 5px; height: 24px; padding-left: 2px; border: 1px solid #666; }
.rar-list { flex: 1; background: #f6f6f6; border: solid #777; border-width: 1px 0; }
.rar-head { display: flex; flex-direction: column; height: 26px; padding-left: 8px; background: #fff; }
.rar-head svg { margin: 2px 0 0 118px; color: #777; }
.rar-list p { display: flex; align-items: center; gap: 2px; height: 19px; padding-left: 7px; }
.rar-list .picked { background: #eee; }
.rar-status { display: flex; align-items: center; height: 24px; padding-left: 4px; background: #f0f0f0; }
.rar-status span { border-left: 1px solid #ccc; padding-left: 3px; }

.files { left: 284px; right: 211px; top: 14px; bottom: 73px; }
.titlebar { display: flex; align-items: center; height: 31px; padding: 0 1px 0 8px; gap: 7px; }
.titlebar i { width: 1px; height: 12px; background: #aaa; margin: 0 1px; }
.titlebar span { color: #000; }
.winctl { margin-left: auto; display: flex; }
.winctl button { width: 46px; height: 31px; display: grid; place-items: center; }
.tabs { display: flex; height: 24px; border-bottom: 1px solid #dadbdc; color: #333; }
.tabs > button { width: 57px; height: 24px; }
.tabs .file { width: 56px; background: #0063b1; color: #fff; }
.tabs .on { width: 58px; background: #f5f6f7; border: 1px solid #dadbdc; border-bottom: 0; }
.help { margin-left: auto; display: flex; align-items: center; gap: 9px; padding-right: 4px; }
.help button { width: 16px; height: 16px; border-radius: 50%; background: #0f6cbd; color: #fff; font-weight: 700; line-height: 16px; }

.ribbon { display: flex; height: 92px; background: #f5f6f7; border-bottom: 1px solid #dadbdc; color: #222; }
.group { display: flex; flex-direction: column; margin: 3px 0 1px; border-right: 1px solid #e0e1e3; }
.tools { flex: 1; display: flex; align-items: flex-start; padding-top: 1px; }
.group h2 { text-align: center; line-height: 16px; color: #555; }
.clip { width: 263px; } .org { width: 165px; } .new { width: 83px; } .open { width: 131px; } .sel { width: 117px; }
.big { width: 54px; display: block; text-align: center; line-height: 13px; padding-top: 4px; }
.big svg { margin: 0 auto 3px; }
.big .under { margin: 2px auto; }
.clip .big:first-child { width: 78px; } .clip .copy { width: 31px; } .clip .paste { width: 53px; }
.copy { display: flex; flex-direction: column; align-items: center; }
.dim { color: #777; }
.stack { display: flex; flex-direction: column; }
.stack button { display: flex; align-items: center; gap: 3px; height: 22px; }
.clip .stack { margin-left: -1px; }
.org .stack { padding: 8px 0 0 9px; gap: 7px; width: 85px; }
.org .split { padding-left: 6px; border-left: 1px solid #ddd; height: 65px; width: 78px; }
.new .big { width: 49px; }
.open .big { width: 63px; }
.sel .stack { padding-left: 9px; }

.addressbar { display: flex; align-items: center; height: 34px; padding: 0 13px 0 12px; }
.addressbar > button { width: 30px; display: grid; justify-items: start; }
.addressbar .hist { margin: 0 11px 0 -2px; }
.addressbar > .upbtn { width: 19px; }
.crumbs { flex: 1; display: flex; align-items: center; gap: 6px; height: 22px; padding-left: 3px; border: 1px solid #d9d9d9; color: #111; }
.crumbs span { padding-left: 3px; }
.crumbs button { margin-left: auto; width: 16px; height: 20px; display: grid; place-items: center; }
.crumbs .refresh { margin-left: -6px; width: 17px; border-left: 1px solid #d9d9d9; }
.search { display: flex; align-items: center; width: 202px; height: 22px; margin-left: 12px; padding: 0 7px 0 8px; border: 1px solid #d9d9d9; color: #666; }
.search input::placeholder { color: #6d6d6d; opacity: 1; }

.body { flex: 1; min-height: 0; display: flex; }
.side { display: flex; width: 156px; overflow: hidden; }
.side ul { flex: 1; min-width: 0; list-style: none; overflow: hidden; padding-top: 1px; }
.side li { display: flex; align-items: center; gap: 5px; height: 24px; padding-left: 32px; white-space: nowrap; overflow: hidden; color: #000; }
.side .sub { padding-left: 40px; }
.side .current { background: #d9d9d9; }
.vbar { width: 17px; margin-top: 1px; background: #f0f0f0; display: flex; flex-direction: column; align-items: center; padding: 7px 0 4px; color: #555; }
.vbar span { width: 15px; height: 118px; margin: auto 0 7px; background: #cdcdcd; }
.list { position: relative; flex: 1; min-width: 0; display: flex; flex-direction: column; justify-content: space-between; padding-left: 4px; }
.sort { position: absolute; left: 141px; top: 1px; color: #888; }
table { width: 100%; table-layout: fixed; border-collapse: collapse; color: #6d6d6d; }
.c-date { width: 144px; } .c-type { width: 120px; } .c-size { width: 80px; } .c-end { width: 9px; }
th { height: 32px; padding: 0; text-align: left; vertical-align: top; font-weight: 400; color: #4c607a; }
th span { display: block; height: 27px; line-height: 28px; padding-left: 6px; border-right: 1px solid #e5e5e5; }
th:first-child span { padding-left: 17px; }
td { height: 21px; padding: 0 0 0 6px; white-space: nowrap; }
td:first-child { display: flex; align-items: center; gap: 5px; padding-left: 19px; color: #000; }
td:nth-child(4) { text-align: right; padding-right: 8px; }
.hbar { display: flex; align-items: center; gap: 6px; height: 15px; background: #f0f0f0; padding: 0 6px 0 5px; }
.hbar span { flex: 1; height: 15px; background: #cdcdcd; }
.status { display: flex; align-items: center; height: 25px; padding: 0 5px 0 14px; color: #2b4a78; }
.status span { margin-right: auto; }
.status button { width: 22px; height: 23px; display: grid; place-items: center; }
.status .on { background: #cce8f8; border: 1px solid #3c9bd0; }

.taskbar { display: flex; height: 40px; background: linear-gradient(90deg, #03141d, #020a18); color: #fff; }
.start { width: 48px; display: grid; place-items: center; }
.find { display: flex; align-items: center; gap: 11px; width: 288px; padding-left: 11px; background: #f2f2f2; border: 1px solid #bbb; color: #333; font-size: 14px; }
.find input::placeholder { color: #444; opacity: 1; }
.app { position: relative; width: 48px; margin-right: 1px; display: grid; place-items: center; }
.wide { width: 50px; margin-right: 0; }
.app.active { background: #34464f; }
.app.active::after, .running::after { content: ""; position: absolute; left: 4px; right: 4px; bottom: 0; height: 3px; background: #76b9ed; }
.app.active::after { left: 0; right: 0; }
.tray { margin-left: auto; display: flex; align-items: center; gap: 9px; margin-right: 4px; padding-right: 20px; border-right: 1px solid #555; }
.tray time { text-align: center; line-height: 18px; }
.note { margin-left: 9px; }
```
